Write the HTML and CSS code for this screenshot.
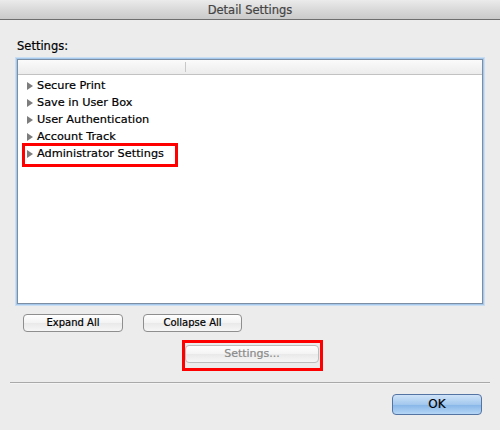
FILE: index.html
```html
<!DOCTYPE html>
<html>
<head>
<meta charset="utf-8">
<link rel="stylesheet" href="styles.css">
</head>
<body>
<div class="window">
  <div class="titlebar">Detail Settings</div>
  <div class="content">
    <div class="label">Settings:</div>
    <div class="listbox">
      <div class="header"><div class="col1"></div><div class="col2"></div></div>
      <div class="rows">
        <div class="row"><span class="tri"></span>Secure Print</div>
        <div class="row"><span class="tri"></span>Save in User Box</div>
        <div class="row"><span class="tri"></span>User Authentication</div>
        <div class="row"><span class="tri"></span>Account Track</div>
        <div class="row"><span class="tri"></span>Administrator Settings</div>
      </div>
      <div class="mark mark-admin"></div>
    </div>
    <div class="btnrow">
      <div class="btn btn-expand">Expand All</div>
      <div class="btn btn-collapse">Collapse All</div>
    </div>
    <div class="settingsrow">
      <div class="btn btn-settings">Settings...</div>
      <div class="mark mark-settings"></div>
    </div>
    <div class="sep"></div>
    <div class="okrow">
      <div class="btn btn-ok">OK</div>
    </div>
  </div>
</div>
</body>
</html>
```
FILE: styles.css
```css
html, body {
  margin: 0;
  padding: 0;
}
body {
  width: 500px;
  height: 430px;
  background: #ececec;
  font-family: "DejaVu Sans", "Liberation Sans", sans-serif;
  color: #000;
  overflow: hidden;
  -webkit-text-stroke: 0.2px currentColor;
}
.window {
  width: 500px;
  height: 430px;
  background: #ececec;
}
.titlebar {
  height: 19px;
  border-bottom: 1px solid #6e6e6e;
  background: linear-gradient(#ebebeb, #d6d6d6 60%, #cacaca);
  text-align: center;
  font-size: 11.5px;
  line-height: 20px;
  color: #444;
}
.content {
  padding: 0 17px;
}
.label {
  margin-top: 19px;
  font-size: 11.5px;
  line-height: 14px;
  height: 14px;
}
.listbox {
  position: relative;
  margin-top: 6px;
  width: 464px;
  height: 243px;
  border: 1px solid #7c8ea3;
  box-shadow: 0 0 0 1px #a6c8ea, 0 0 0 2px #c9def2;
  background: #fff;
}
.header {
  display: flex;
  height: 14px;
  border-bottom: 1px solid #c2c2c2;
  background: linear-gradient(#fbfbfb, #ececec);
}
.col1 {
  width: 167px;
  height: 10px;
  margin-top: 2px;
  border-right: 1px solid #c8c8c8;
}
.rows {
  padding-top: 2px;
}
.row {
  display: flex;
  align-items: center;
  height: 17px;
  padding-left: 9px;
  font-size: 11.3px;
}
.tri {
  width: 0;
  height: 0;
  border-top: 4px solid transparent;
  border-bottom: 4px solid transparent;
  border-left: 6px solid #7d7d7d;
  margin-right: 4px;
}
.mark {
  position: absolute;
  border: 3px solid #ff0000;
}
.mark-admin {
  left: 4px;
  top: 83px;
  width: 150px;
  height: 18px;
}
.btnrow {
  display: flex;
  gap: 20px;
  margin-top: 10px;
  padding-left: 6px;
}
.btn {
  box-sizing: border-box;
  height: 18px;
  border: 1px solid #8e8e8e;
  border-radius: 4px;
  background: linear-gradient(#ffffff, #f3f3f3 50%, #e9e9e9 51%, #f6f6f6);
  font-size: 10px;
  line-height: 16px;
  text-align: center;
}
.btn-expand {
  width: 100px;
}
.btn-collapse {
  width: 99px;
}
.settingsrow {
  position: relative;
  margin-top: 13px;
  margin-left: 168px;
  width: 134px;
}
.btn-settings {
  width: 134px;
  color: #8a8a8a;
  border-color: #bdbdbd;
  font-size: 11px;
}
.mark-settings {
  left: -3px;
  top: -5px;
  width: 135px;
  height: 25px;
}
.sep {
  margin: 19px -7px 0;
  height: 1px;
  background: #a9a9a9;
  border-bottom: 1px solid #f4f4f4;
}
.okrow {
  display: flex;
  justify-content: flex-end;
  margin-top: 10px;
  padding-right: 1px;
}
.btn-ok {
  width: 90px;
  height: 21px;
  border-color: #5474a4;
  background: linear-gradient(#cfe3f8, #a3c8ee 50%, #86b5e8 51%, #b5d6f6);
  font-size: 12px;
  line-height: 19px;
}
```
